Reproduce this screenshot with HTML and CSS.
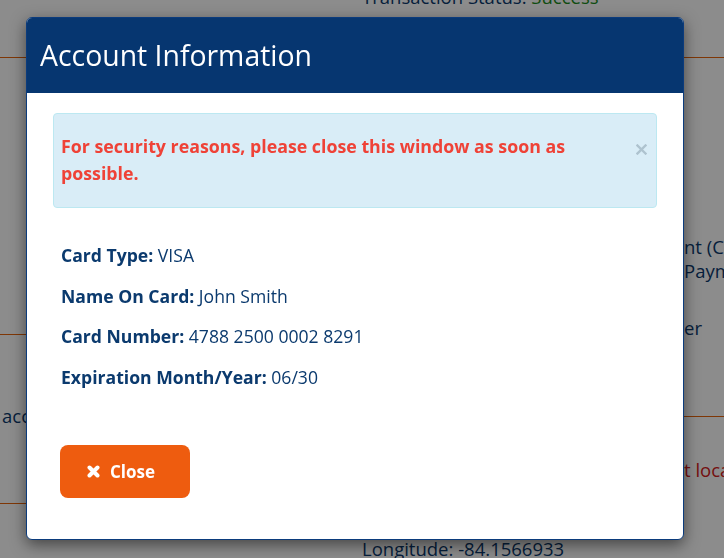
FILE: index.html
```html
<!DOCTYPE html>
<html>
<head>
  <title>Transaction Details</title>
  <link rel="stylesheet" href="styles.css">
</head>
<body>
  <div class="page">
    <div class="top-row">
      <div></div>
      <p class="info">Transaction Status: <span class="ok">Success</span></p>
    </div>
    <hr class="rule">
    <div class="cols">
      <div class="col-left">
        <hr class="rule gap-1">
        <p class="info note gap-8">account holder was notified</p>
        <hr class="rule gap-2">
      </div>
      <div class="col-right">
        <div class="info pair gap-3">
          <div class="split"><span class="lead">Payment Method: Credit Accou</span><span>nt (CC)</span></div>
          <div class="split"><span class="lead">Card ending 8291 - Online </span><span>Payment</span></div>
        </div>
        <div class="info split gap-4"><span class="lead">Processed by: Merchant Manag</span><span>er</span></div>
        <hr class="rule gap-5">
        <div class="info warn split gap-6"><span class="lead">Warning: transaction from firs</span><span>t location</span></div>
        <p class="info gap-7">Longitude: -84.1566933</p>
      </div>
    </div>
  </div>

  <div class="overlay"></div>

  <div class="modal">
    <div class="modal-header">
      <h2 class="modal-title">Account Information</h2>
    </div>
    <div class="modal-body">
      <div class="alert">
        <p class="alert-text">For security reasons, please close this window as soon as possible.</p>
        <button class="alert-close" type="button" aria-label="Close">
          <svg width="11" height="11" viewBox="0 0 11 11"><path d="M1.5 1.5 L9.5 9.5 M9.5 1.5 L1.5 9.5" stroke="#aec3cf" stroke-width="2.4" stroke-linecap="square"/></svg>
        </button>
      </div>

      <div class="details">
        <p><b>Card Type:</b> VISA</p>
        <p><b>Name On Card:</b> John Smith</p>
        <p><b>Card Number:</b> 4788 2500 0002 8291</p>
        <p><b>Expiration Month/Year:</b> 06/30</p>
      </div>

      <button class="btn-close" type="button">
        <svg width="13" height="13" viewBox="0 0 13 13"><path d="M2.5 2.5 L10.5 10.5 M10.5 2.5 L2.5 10.5" stroke="#fff" stroke-width="4" stroke-linecap="round"/></svg>
        Close
      </button>
    </div>
  </div>
</body>
</html>
```
FILE: styles.css
```css
body {
  margin: 0;
  font-family: "Open Sans", Arial, sans-serif;
  background-color: #fff;
  color: #0b3a6e;
  overflow: hidden;
}

p {
  margin: 0;
}

/* page behind the dialog */
.page {
  font-size: 18.5px;
  line-height: 24px;
}

.top-row,
.cols {
  display: grid;
  grid-template-columns: 362px 1fr;
}

.top-row {
  margin-top: -15px;
}

.info {
  white-space: nowrap;
}

.ok {
  color: #1c8c1c;
}

.warn {
  color: #d42020;
}

.rule {
  margin: 48px 0 0;
  border: none;
  border-top: 1px solid #e8640c;
}

.col-left {
  padding-left: 2px;
}

.col-left .rule {
  margin-left: -2px;
}

.split {
  display: flex;
}

.split .lead {
  flex: none;
  width: 322px;
  overflow: hidden;
}

.gap-1 { margin-top: 276px; }
.gap-2 { margin-top: 75px; }
.gap-3 { margin-top: 177px; }
.gap-4 { margin-top: 33px; }
.gap-5 { margin-top: 76px; }
.gap-6 { margin-top: 41px; }
.gap-7 { margin-top: 55px; }
.gap-8 { margin-top: 69px; }

.overlay {
  position: fixed;
  inset: 0;
  background-color: rgba(0, 0, 0, 0.45);
}

/* dialog */
.modal {
  position: fixed;
  top: 17px;
  left: 26px;
  width: 656px;
  background-color: #fff;
  border: 1px solid #0b3b7c;
  border-radius: 6px;
  box-shadow: 0 5px 15px rgba(0, 0, 0, 0.5);
  overflow: hidden;
}

.modal-header {
  display: flex;
  align-items: center;
  height: 75px;
  padding: 0 13px 1px;
  box-sizing: border-box;
  background-color: #063670;
}

.modal-title {
  margin: 0;
  color: #fff;
  font-size: 28.4px;
  font-weight: normal;
}

.modal-body {
  padding: 20px 26px 41px;
}

.alert {
  display: flex;
  align-items: flex-start;
  padding: 19px 9px 20px 7px;
  background-color: #d9edf7;
  border: 1px solid #bce8f1;
  border-radius: 4px;
}

.alert-text {
  flex: 1;
  color: #ef4237;
  font-size: 17.8px;
  font-weight: bold;
  line-height: 27px;
}

.alert-close {
  display: flex;
  margin: 11px 0 0 20px;
  padding: 0;
  border: none;
  background: none;
  cursor: pointer;
}

.details {
  display: flex;
  flex-direction: column;
  gap: 13.5px;
  margin-top: 34px;
  padding: 0 8px;
  font-size: 17.6px;
  line-height: 27px;
}

.btn-close {
  display: flex;
  align-items: center;
  gap: 10px;
  width: 130px;
  height: 53px;
  margin: 54px 0 0 7px;
  padding: 0 0 0 27px;
  border: none;
  border-radius: 8px;
  background-color: #ee5c0f;
  color: #fff;
  font-family: inherit;
  font-size: 17px;
  font-weight: bold;
  cursor: pointer;
}
```
